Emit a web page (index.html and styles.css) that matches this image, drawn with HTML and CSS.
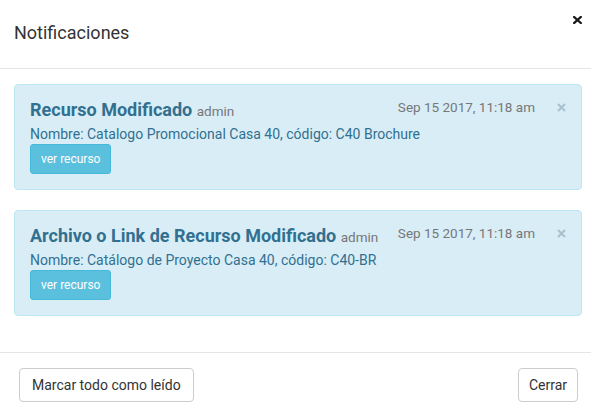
FILE: index.html
```html
<!DOCTYPE html>
<html lang="es">
<head>
  <meta charset="UTF-8">
  <meta name="viewport" content="width=device-width, initial-scale=1.0">
  <title>Notificaciones</title>
  <link rel="stylesheet" href="styles.css">
</head>

<body>

  <div class="modal">
    <div class="modal-header">
      <h4 class="modal-title">Notificaciones</h4>
      <button class="modal-close" aria-label="Cerrar">
        <svg width="9" height="8" viewBox="0 0 9 8">
          <path d="M1.2 1 L7.8 7 M7.8 1 L1.2 7" stroke="#1a1a1a" stroke-width="2.3" stroke-linecap="square" />
        </svg>
      </button>
    </div>

    <div class="modal-body">
      <div class="alert">
        <div class="alert-top">
          <h4 class="alert-title">Recurso Modificado <small>admin</small></h4>
          <span class="alert-date">Sep 15 2017, 11:18 am</span>
          <button class="alert-close" aria-label="Cerrar">
            <svg width="9" height="9" viewBox="0 0 9 9">
              <path d="M1 1 L8 8 M8 1 L1 8" stroke="#a9c1cd" stroke-width="2" />
            </svg>
          </button>
        </div>
        <p class="alert-text">Nombre: Catalogo Promocional Casa 40, código: C40 Brochure</p>
        <button class="btn btn-info">ver recurso</button>
      </div>

      <div class="alert">
        <div class="alert-top">
          <h4 class="alert-title">Archivo o Link de Recurso Modificado <small>admin</small></h4>
          <span class="alert-date">Sep 15 2017, 11:18 am</span>
          <button class="alert-close" aria-label="Cerrar">
            <svg width="9" height="9" viewBox="0 0 9 9">
              <path d="M1 1 L8 8 M8 1 L1 8" stroke="#a9c1cd" stroke-width="2" />
            </svg>
          </button>
        </div>
        <p class="alert-text">Nombre: Catálogo de Proyecto Casa 40, código: C40-BR</p>
        <button class="btn btn-info">ver recurso</button>
      </div>
    </div>

    <div class="modal-footer">
      <button class="btn btn-default">Marcar todo como leído</button>
      <button class="btn btn-default btn-narrow">Cerrar</button>
    </div>
  </div>

</body>

</html>
```

FILE: styles.css
```css
body {
  margin: 0;
  background-color: #fff;
  font-family: Roboto, "Liberation Sans", Arial, sans-serif;
  font-size: 14px;
  line-height: 20px;
  color: #333;
}

.modal {
  width: 100%;
}

.modal-header {
  display: flex;
  justify-content: space-between;
  align-items: flex-start;
  padding: 20px 9px 22px 14px;
  border-bottom: 1px solid #e5e5e5;
}

.modal-title {
  margin: 0;
  font-size: 18px;
  font-weight: normal;
  line-height: 26px;
  color: #333;
}

.modal-close {
  display: block;
  margin-top: -4px;
  padding: 0;
  border: none;
  background: none;
  cursor: pointer;
}

.modal-close svg,
.alert-close svg {
  display: block;
}

.modal-body {
  padding: 15px 9px 16px 14px;
}

.alert {
  display: flex;
  flex-direction: column;
  align-items: flex-start;
  margin-bottom: 20px;
  padding: 15px;
  background-color: #d9edf7;
  border: 1px solid #bce8f1;
  border-radius: 4px;
  color: #31708f;
}

.alert-top {
  display: flex;
  align-items: flex-start;
  width: 100%;
}

.alert-title {
  flex: 1;
  margin: 0;
  font-size: 18px;
  font-weight: bold;
  line-height: 20px;
  color: #31708f;
}

.alert-title small {
  font-size: 75%;
  font-weight: normal;
  color: #777;
}

.alert-date {
  font-size: 13.5px;
  line-height: 14px;
  color: #777;
}

.alert-close {
  margin: 3px 0 0 22px;
  padding: 0;
  border: none;
  background: none;
  cursor: pointer;
}

.alert-text {
  margin: 3px 0 0;
  line-height: 20px;
}

.btn {
  font-family: inherit;
  cursor: pointer;
  border: 1px solid transparent;
}

.btn-info {
  padding: 5px 10px;
  font-size: 12px;
  line-height: 18px;
  color: #fff;
  background-color: #5bc0de;
  border-color: #46b8da;
  border-radius: 3px;
}

.btn-default {
  padding: 6px 12px;
  font-size: 14px;
  line-height: 20px;
  color: #333;
  background-color: #fff;
  border-color: #ccc;
  border-radius: 4px;
}

.btn-narrow {
  padding: 6px 10px;
}

.modal-footer {
  display: flex;
  justify-content: space-between;
  padding: 15px 13px 15px 19px;
  border-top: 1px solid #e5e5e5;
}
```
